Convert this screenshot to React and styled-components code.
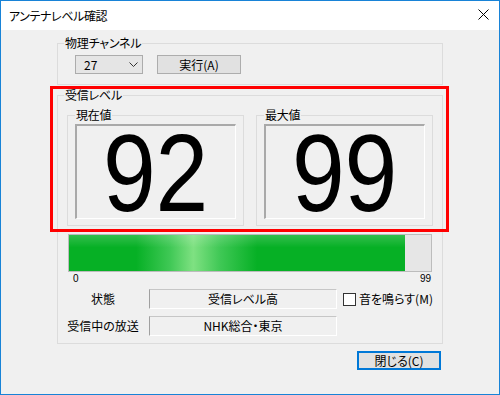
import React from 'react';
import styled, { createGlobalStyle } from 'styled-components';

const GlobalStyle = createGlobalStyle`
  html, body {
    margin: 0;
    padding: 0;
    background: #ffffff;
  }
  * {
    box-sizing: border-box;
  }
`;

const UI_FONT = `"Noto Sans CJK JP", "Noto Sans", sans-serif`;

const Window = styled.div`
  width: 500px;
  height: 395px;
  border: 1px solid #1883d7;
  background: #f0f0f0;
  position: relative;
  display: flex;
  flex-direction: column;
  font-family: ${UI_FONT};
  font-size: 12px;
  font-feature-settings: 'palt';
  color: #000;
`;

const TitleBar = styled.div`
  height: 29px;
  background: #ffffff;
  display: flex;
  align-items: center;
  padding-left: 8px;
  padding-right: 10px;
`;

const Title = styled.span`
  font-size: 12px;
  line-height: 16px;
  letter-spacing: -0.4px;
`;

const CloseIcon = styled.svg`
  margin-left: auto;
  margin-top: -2px;
`;

const Body = styled.div`
  padding-left: 56px;
  display: flex;
  flex-direction: column;
`;

const Group = styled.div`
  position: relative;
  border: 1px solid #dcdcdc;
  width: ${p => p.$w}px;
  height: ${p => p.$h}px;
  margin-top: ${p => p.$mt || 0}px;
  padding: ${p => p.$pad};
`;

const Legend = styled.span`
  position: absolute;
  top: -8px;
  left: ${p => p.$left || 6}px;
  padding: 0 1px;
  line-height: 14px;
  background: #f0f0f0;
  letter-spacing: -0.2px;
`;

const Row = styled.div`
  display: flex;
  align-items: flex-start;
  gap: ${p => p.$gap || 0}px;
`;

const Select = styled.div`
  width: 68px;
  height: 19px;
  background: #e5e5e5;
  border: 1px solid #acacac;
  display: flex;
  align-items: center;
  justify-content: space-between;
  padding: 0 4px 0 8px;
  line-height: 16px;
`;

const Button = styled.div`
  width: 84px;
  height: 19px;
  background: #e1e1e1;
  border: 1px solid ${p => (p.$default ? '#0078d7' : '#adadad')};
  box-shadow: ${p => (p.$default ? 'inset 0 0 0 1px #0078d7' : 'none')};
  display: flex;
  align-items: center;
  justify-content: center;
  line-height: 16px;
`;

const Display = styled.div`
  width: 161px;
  height: 95px;
  border-style: solid;
  border-width: 2px 1px 1px 2px;
  border-color: #a9a9a9 #ffffff #ffffff #a9a9a9;
  display: flex;
  align-items: center;
  justify-content: center;
`;

const BigNumber = styled.div`
  font-family: "Liberation Sans", Arial, sans-serif;
  font-size: 109px;
  line-height: 80px;
  height: 80px;
  margin-top: 2px;
  transform: scaleX(0.87);
`;

const Bar = styled.div`
  width: 364px;
  height: 38px;
  margin: 8px 0 0 1px;
  border: 1px solid #bcbcbc;
  background: #e6e6e6;
  display: flex;
`;

const BarFill = styled.div`
  height: 100%;
  background:
    linear-gradient(180deg, rgba(255, 255, 255, 0.18) 0, rgba(255, 255, 255, 0) 35%),
    linear-gradient(90deg, #06b025 0, #06b025 20%, #3fc855 30%, #7fe182 37%, #3fc855 45%, #06b025 56%, #06b025 100%);
`;

const Scale = styled.div`
  width: 364px;
  margin-left: 1px;
  display: flex;
  justify-content: space-between;
  padding: 0 1px 0 5px;
  font-family: "Liberation Sans", Arial, sans-serif;
  font-size: 10px;
  line-height: 14px;
`;

const StatusGrid = styled.div`
  display: grid;
  grid-template-columns: 72px 188px auto;
  grid-auto-rows: 20px;
  column-gap: 10px;
  row-gap: 7px;
  margin-top: 3px;
  align-items: center;
`;

const Label = styled.span`
  text-align: center;
  line-height: 16px;
`;

const Field = styled.div`
  height: 20px;
  border-style: solid;
  border-width: 1px;
  border-color: #c6c6c6 #ffffff #ffffff #a0a0a0;
  display: flex;
  align-items: center;
  justify-content: center;
  line-height: 16px;
`;

const CheckLabel = styled.label`
  display: flex;
  align-items: center;
  gap: 3px;
  margin-left: -4px;
  line-height: 16px;
`;

const CheckBox = styled.span`
  width: 13px;
  height: 13px;
  border: 1px solid #333333;
  background: #ffffff;
`;

const Footer = styled.div`
  width: 386px;
  display: flex;
  justify-content: flex-end;
  padding-right: 2px;
  margin-top: 7px;
`;

const Highlight = styled.div`
  position: absolute;
  left: 49px;
  top: 85px;
  width: 399px;
  height: 146px;
  border: 3px solid #ff0000;
  pointer-events: none;
`;

const level = { current: 92, max: 99, scaleMax: 99 };

export default function App() {
  const fill = Math.round((level.current / level.scaleMax) * 362);

  return (
    <>
      <GlobalStyle />
      <Window>
        <TitleBar>
          <Title>アンテナレベル確認</Title>
          <CloseIcon width="11" height="11" viewBox="0 0 11 11">
            <path d="M0.5 0.5 L10.5 10.5 M10.5 0.5 L0.5 10.5" stroke="#000" strokeWidth="1" fill="none" />
          </CloseIcon>
        </TitleBar>
        <Body>
          <Group $w={386} $h={42} $mt={13} $pad="11px 0 0 17px">
            <Legend>物理チャンネル</Legend>
            <Row $gap={14}>
              <Select>
                <span>27</span>
                <svg width="9" height="6" viewBox="0 0 9 6">
                  <path d="M0.5 0.5 L4.5 4.5 L8.5 0.5" stroke="#333" strokeWidth="1" fill="none" />
                </svg>
              </Select>
              <Button>実行(A)</Button>
            </Row>
          </Group>

          <Group $w={386} $h={249} $mt={10} $pad="19px 0 0 9px">
            <Legend>受信レベル</Legend>
            <Row $gap={12}>
              <Group $w={177} $h={111} $pad="8px 0 0 7px">
                <Legend $left={7}>現在値</Legend>
                <Display>
                  <BigNumber>{level.current}</BigNumber>
                </Display>
              </Group>
              <Group $w={177} $h={111} $pad="8px 0 0 7px">
                <Legend $left={7}>最大値</Legend>
                <Display>
                  <BigNumber>{level.max}</BigNumber>
                </Display>
              </Group>
            </Row>
            <Bar>
              <BarFill style={{ width: fill }} />
            </Bar>
            <Scale>
              <span>0</span>
              <span>{level.scaleMax}</span>
            </Scale>
            <StatusGrid>
              <Label>状態</Label>
              <Field>受信レベル高</Field>
              <CheckLabel>
                <CheckBox />
                音を鳴らす(M)
              </CheckLabel>
              <Label>受信中の放送</Label>
              <Field>NHK総合・東京</Field>
            </StatusGrid>
          </Group>

          <Footer>
            <Button $default>閉じる(C)</Button>
          </Footer>
        </Body>
        <Highlight />
      </Window>
    </>
  );
}
